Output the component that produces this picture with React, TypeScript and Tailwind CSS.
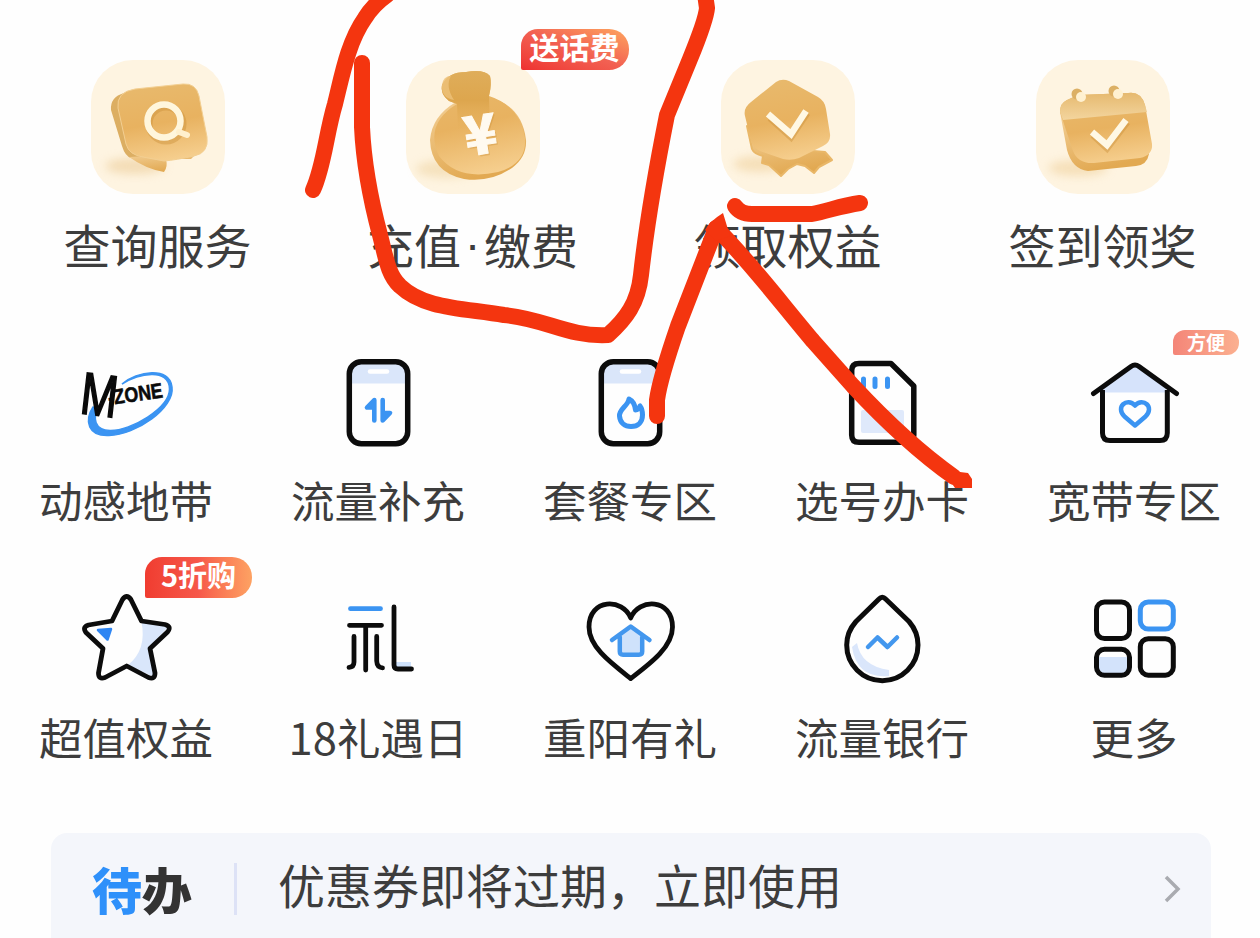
import type { ReactNode } from "react";

type Entry = {
  name: ReactNode;
  icon: ReactNode;
  badge?: ReactNode;
};

const SearchArt = () => (
  <>
    <ellipse cx="44" cy="106" rx="30" ry="8" fill="#e9c58a" opacity="0.5" filter="url(#soft)" />
    <path d="M20 50 Q19 37 33 33 L50 40 L52 98 L40 98 Q34 96 31 86Z" fill="#dcae62" />
    <path d="M38 97 Q55 109 73 112 Q77 107 75 99 L100 99 L106 93Z" fill="url(#goldDark)" />
    <path d="M44 29 L92 24 Q105 23 108 36 L116 77 Q118 93 103 96 Q85 100 73 101 L52 97 Q38 95 35 84 L27 48 Q25 32 44 29Z" fill="url(#gold)" stroke="#f3cf92" strokeWidth="1" />
    <ellipse cx="75" cy="64" rx="17" ry="17" fill="none" stroke="#c98c35" strokeWidth="7" opacity="0.4" />
    <circle cx="73" cy="61" r="16.5" fill="none" stroke="#fff6dc" strokeWidth="6.5" />
    <path d="M88 72 L96 75" stroke="#fff0cd" strokeWidth="6" strokeLinecap="round" />
  </>
);

const MoneyArt = () => (
  <>
    <ellipse cx="40" cy="109" rx="30" ry="9" fill="#f0d6a6" opacity="0.6" filter="url(#soft)" />
    <path d="M50 42 Q26 56 24 80 Q25 112 58 119 Q84 123 106 108 Q121 97 120 80 Q116 45 82 37Z" fill="url(#goldDark)" />
    <path d="M43 41 Q34 34 36 25 Q42 12 60 12 Q78 9 84 16 Q86 24 83 36 Q114 46 119 78 Q121 104 92 112 Q52 121 33 96 Q18 64 51 44Z" fill="url(#gold)" />
    <path d="M43 41 Q34 34 36 25 Q42 12 60 12 Q78 9 84 16 Q86 24 83 36 L84 70 H52 L51 44Z" fill="url(#neck)" />
    <path d="M36 25 Q37 16 45 16 Q39 26 48 40 Q35 38 36 25Z" fill="#eec27a" opacity="0.8" />
    <g transform="rotate(-9 75 75)" fontFamily="Noto Sans CJK SC, sans-serif" fontSize="54" fontWeight="900" textAnchor="middle">
      <text x="76" y="96" fill="#c98c35" opacity="0.35">¥</text>
      <text x="74.500" y="94" fill="#fffaf0" stroke="#fffaf0" strokeWidth="1">¥</text>
    </g>
  </>
);

const MedalArt = () => (
  <>
    <ellipse cx="38" cy="104" rx="26" ry="8" fill="#efcf98" opacity="0.55" filter="url(#soft)" />
    <path d="M26 66 L31 89 Q33 94 42 96 L41 103 L48 105 L60 116 L67 109 L76 104 L84 106 L93 113 L98 107 L111 100 L104 92 L80 90Z" fill="url(#goldDark)" stroke="#e9b768" strokeWidth="2" strokeLinejoin="round" />
    <path d="M55 22 Q61 18 68 21 L97 37 Q104 41 105 49 L109 74 Q110 82 102 86 L78 98 Q70 101 62 99 L39 91 Q32 88 30 81 L24 56 Q22 48 30 42Z" fill="url(#gold)" />
    <path d="M49 58 L70 77 L86 53" fill="none" stroke="#c98c35" strokeWidth="7" opacity="0.4" />
    <path d="M47 54 L70 74 L85 51" fill="none" stroke="#fff8e4" strokeWidth="6.5" />
  </>
);

const CalendarArt = () => (
  <>
    <ellipse cx="42" cy="108" rx="30" ry="8" fill="#efcf98" opacity="0.55" filter="url(#soft)" />
    <path d="M24 52 L31 90 Q36 109 52 111 L100 106 Q111 105 113 94 L104 60Z" fill="url(#goldDark)" />
    <path d="M24 52 Q24 43 31 40 L42 35 L92 33 Q105 31 109 45 L116 84 Q117 95 104 98 L58 103 Q42 104 37 91Z" fill="url(#gold)" />
    <path d="M24 52 Q24 43 31 40 L42 35 L92 33 Q105 31 109 45 L111 52 L27 60Z" fill="url(#band)" />
    <circle cx="41" cy="34" r="5.5" fill="#dcb065" />
    <circle cx="45" cy="37" r="5" fill="#fff1d1" />
    <circle cx="78" cy="31" r="5.5" fill="#dcb065" />
    <circle cx="82" cy="34" r="5" fill="#fff1d1" />
    <path d="M57 75 L71 88 L91 62" fill="none" stroke="#c98c35" strokeWidth="7" opacity="0.4" />
    <path d="M56 72 L71 85 L90 60" fill="none" stroke="#fff8e4" strokeWidth="6.5" />
  </>
);

const MZoneIcon = () => (
  <>
    <path d="M46 31 C62 21 93 14 93.500 36 C93.500 55 55 78 34 77.500 C18 77 17 65 22 55 L17 54 C8 68 12 83.500 33 82.500 C60 82 99 55 96 34 C94 13 61 18 46 31Z" fill="#3b94f2" stroke="#3b94f2" strokeWidth="1.500" />
    <g fontFamily="Liberation Sans, sans-serif" fontWeight="700" fill="#0a0a0a">
      <text transform="matrix(0.78 0.1 -0.12 1.05 3 60)" fontSize="56" fontWeight="400" stroke="#0a0a0a" strokeWidth="1.800">M</text>
      <text transform="translate(33 52) rotate(-8)" fontSize="21" textLength="55" lengthAdjust="spacingAndGlyphs" stroke="#0a0a0a" strokeWidth="0.600">-ZONE</text>
    </g>
  </>
);

const PhoneFrame = ({ children }: { children: ReactNode }) => (
  <>
    <rect x="23" y="11" width="55" height="19.5" fill="#dae6fa" />
    <path d="M42 18.5 H59" stroke="#fff" strokeWidth="4.5" strokeLinecap="round" />
    <rect x="21.3" y="8.8" width="58.4" height="82" rx="12" fill="none" stroke="#0c0c0c" strokeWidth="5.5" />
    {children}
  </>
);

const DataIcon = () => (
  <PhoneFrame>
    <path d="M46.3 67.500 V47 L39 54.500 H46 M54.700 47 V67.500 L62 60 H55" fill="#3b94f2" stroke="#3b94f2" strokeWidth="4.600" strokeLinecap="round" strokeLinejoin="round" />
  </PhoneFrame>
);

const FlameIcon = () => (
  <PhoneFrame>
    <path d="M49 46 C48 53 39 56 39.500 63 C40 70 45 73.500 51 73.500 C58 73.500 62.500 69 62.500 62 C62.500 58 61.500 55 60 53 C59 56 57.500 57 55.500 57 C55 52 53 48 49 46Z" fill="none" stroke="#3b94f2" strokeWidth="5" strokeLinejoin="round" />
  </PhoneFrame>
);

const SimIcon = () => (
  <>
    <rect x="29" y="57" width="43" height="23" rx="2" fill="#dfe9fb" />
    <path d="M27 10.500 H59 L81.800 33 V82 Q81.800 89.300 75 89.300 H27 Q19.700 89.300 19.700 82 V17.500 Q19.700 10.500 27 10.500Z" fill="none" stroke="#0c0c0c" strokeWidth="5.500" strokeLinejoin="round" />
    <path d="M31.500 26 V33.500 M43 26 V33.500 M55.500 26 V33.500" stroke="#3b94f2" strokeWidth="5" strokeLinecap="round" />
  </>
);

const HomeIcon = () => (
  <>
    <path d="M19 36 L51 12 L82 36 V39.500 H19Z" fill="#d6e3fb" />
    <path d="M18.500 37 V80 Q18.500 87.500 26 87.500 H76 Q83.300 87.500 83.300 80 V37" fill="none" stroke="#0c0c0c" strokeWidth="5" />
    <path d="M9.500 40.500 L47 13.500 Q51 10.500 55 13.500 L92.500 40.500" fill="none" stroke="#0c0c0c" strokeWidth="5" strokeLinecap="round" />
    <path d="M51 72.500 L40.500 63.500 C31 54 43 44 51 52.500 C59 44 71 54 61.500 63.500Z" fill="none" stroke="#3b94f2" strokeWidth="4.500" strokeLinejoin="round" />
  </>
);

const StarIcon = () => (
  <>
    <path d="M65.500 32 L92 37 L73 58 L78 87 L52 75 Q71 60 65.500 32Z" fill="#d9e6fb" />
    <path d="M46.500 9.500 Q50.700 3.500 54.900 9.500 L65.500 31 L89 34.500 Q96 36.500 91.500 42 L74 58.500 L79 83 Q79 90 72.500 87.500 L50.700 76 L29 87.500 Q22.500 90 22.500 83 L27 58.500 L10 42.500 Q6 37 12.500 35 L36 31Z" fill="none" stroke="#0c0c0c" strokeWidth="4.800" strokeLinejoin="round" />
    <path d="M22 40 L35 39 L31.500 49.500Z" fill="#2f86f3" stroke="#2f86f3" strokeWidth="2.500" strokeLinejoin="round" />
  </>
);

const GiftDayIcon = () => (
  <>
    <rect x="68" y="72" width="15" height="6" fill="#cfe2fb" />
    <g fill="none" strokeWidth="4.800" strokeLinecap="round">
      <path d="M22.500 18.700 H52.500" stroke="#3b94f2" />
      <path d="M21.500 35.300 H53.500 M37.700 36 V80 M26 46.500 V72 Q26 77 21 77.300 M48.700 46.500 V71 Q49 77.500 54.500 77.800" stroke="#0c0c0c" />
      <path d="M66 17 V75 Q66 79 70 79 H83.500" stroke="#0c0c0c" strokeLinejoin="round" />
    </g>
  </>
);

const HeartIcon = () => (
  <>
    <path d="M50.700 28 C43 8 9 8 9 37 C9 57 31 73 50.700 88.500 C71 73 92.500 57 92.500 37 C92.500 8 58.500 8 50.700 28Z" fill="none" stroke="#0c0c0c" strokeWidth="4.800" strokeLinejoin="round" />
    <path d="M39.500 47 L50.700 37 L62.500 47 V62.500 Q62.500 65 60 65 H42 Q39.500 65 39.500 62.500Z" fill="#cfe2fb" />
    <path d="M32 50 L50.700 36.500 L69.500 50 M39.800 47 V61.500 Q39.800 64.700 43 64.700 H59 Q62.200 64.700 62.200 61.500 V47" fill="none" stroke="#4397ee" strokeWidth="4.500" strokeLinecap="round" strokeLinejoin="round" />
  </>
);

const DropIcon = () => (
  <>
    <path d="M25 53 Q29 76 57 80 V86 Q25 89 20 57Z" fill="#dae6fb" />
    <path d="M47 9 Q50.300 5.500 53.600 9 L77 31.500 Q86 42 86 55 A35.600 35.600 0 0 1 14.700 55 Q14.700 42 24 31.500Z" fill="none" stroke="#0c0c0c" strokeWidth="5" strokeLinejoin="round" />
    <path d="M36 57 L45.500 47.500 L55.500 57 L65 47.500" fill="none" stroke="#4397ee" strokeWidth="4.500" strokeLinecap="round" strokeLinejoin="round" />
  </>
);

const MoreIcon = () => (
  <>
    <rect x="15" y="67" width="28" height="18" fill="#d3e3fb" />
    <g fill="none" stroke="#0c0c0c" strokeWidth="5">
      <rect x="12.500" y="12" width="33" height="36.500" rx="8" />
      <rect x="56.300" y="12" width="33" height="27" rx="8" stroke="#3b94f2" />
      <rect x="12.500" y="59.300" width="33" height="26" rx="8" />
      <rect x="56.300" y="48.700" width="33" height="36.500" rx="8" />
    </g>
  </>
);

const mainEntries: Entry[] = [
  { name: "查询服务", icon: <SearchArt /> },
  {
    name: (
      <>
        <span>充值</span>
        <span className="w-[23px] text-center font-['Liberation_Sans',sans-serif]">·</span>
        <span>缴费</span>
      </>
    ),
    icon: <MoneyArt />,
    badge: (
      <span className="absolute left-[115px] top-[-31px] flex h-[41px] w-[108px] items-center justify-center rounded-[20px] rounded-tl-[17px] rounded-bl-[2px] bg-linear-to-tr from-[#ee3030] via-[#f26052] to-[#fda55f] pb-[7px] text-[30px] font-bold leading-none text-white">
        送话费
      </span>
    ),
  },
  { name: "领取权益", icon: <MedalArt /> },
  { name: "签到领奖", icon: <CalendarArt /> },
];

const subEntries: Entry[] = [
  { name: "动感地带", icon: <MZoneIcon /> },
  { name: "流量补充", icon: <DataIcon /> },
  { name: "套餐专区", icon: <FlameIcon /> },
  { name: "选号办卡", icon: <SimIcon /> },
  {
    name: "宽带专区",
    icon: <HomeIcon />,
    badge: (
      <span className="absolute left-[89px] top-[-23px] flex h-[25px] w-[66px] items-center justify-center rounded-[12px] rounded-bl-[2px] bg-linear-to-r from-[#f48578] to-[#fbb090] pb-[3px] text-[19px] font-bold leading-none text-white">
        方便
      </span>
    ),
  },
  {
    name: "超值权益",
    icon: <StarIcon />,
    badge: (
      <span className="absolute left-[69px] top-[-33px] flex h-[41px] w-[107px] items-center justify-center rounded-[20px] rounded-tl-[17px] rounded-bl-[2px] bg-linear-to-r from-[#f03c30] via-[#f6584a] to-[#fda263] pb-[7px] text-[29px] font-bold leading-none text-white">
        5折购
      </span>
    ),
  },
  { name: "18礼遇日", icon: <GiftDayIcon /> },
  { name: "重阳有礼", icon: <HeartIcon /> },
  { name: "流量银行", icon: <DropIcon /> },
  { name: "更多", icon: <MoreIcon /> },
];

export default function App() {
  return (
    <div className="relative flex h-[938px] w-[1260px] flex-col overflow-hidden bg-[#fefefe] font-['Noto_Sans_CJK_SC',sans-serif] text-[#3d3d3d]">
      <section className="grid grid-cols-4 pt-[60px]">
        {mainEntries.map((entry, index) => (
          <div key={index} className="flex flex-col items-center">
            <div className="relative h-[134px] w-[134px] rounded-[42px] bg-[#fef4e1]">
              <svg viewBox="0 0 134 134" className="h-full w-full">
                <defs>
                  <linearGradient id="gold" x1="0.4" y1="0" x2="0.6" y2="1">
                    <stop offset="0" stopColor="#e8b96c" />
                    <stop offset="0.5" stopColor="#e8b260" />
                    <stop offset="1" stopColor="#f6cf8f" />
                  </linearGradient>
                  <linearGradient id="goldDark" x1="0" y1="0" x2="0.4" y2="1">
                    <stop offset="0" stopColor="#f3d097" />
                    <stop offset="1" stopColor="#e2a952" />
                  </linearGradient>
                  <linearGradient id="neck" x1="0" y1="0" x2="0" y2="1">
                    <stop offset="0" stopColor="#dfad5a" />
                    <stop offset="0.5" stopColor="#dda64e" />
                    <stop offset="1" stopColor="#e4ae58" stopOpacity="0" />
                  </linearGradient>
                  <linearGradient id="band" x1="0" y1="0" x2="0" y2="1">
                    <stop offset="0" stopColor="#e6b96f" />
                    <stop offset="1" stopColor="#f3d59e" />
                  </linearGradient>
                  <filter id="soft" x="-50%" y="-100%" width="200%" height="300%">
                    <feGaussianBlur stdDeviation="5" />
                  </filter>
                </defs>
                {entry.icon}
              </svg>
              {entry.badge}
            </div>
            <div className="mt-[26px] flex whitespace-nowrap text-[47px] leading-[47px]">
              {entry.name}
            </div>
          </div>
        ))}
      </section>

      <section className="mt-[86px] grid grid-cols-5 gap-y-[68px]">
        {subEntries.map((entry, index) => (
          <div key={index} className="flex flex-col items-center">
            <div className="relative h-[100px] w-[100px]">
              <svg viewBox="0 0 100 100" className="h-full w-full">
                {entry.icon}
              </svg>
              {entry.badge}
            </div>
            <div className="mt-[25px] whitespace-nowrap text-[43.5px] leading-[44px]">
              {entry.name}
            </div>
          </div>
        ))}
      </section>

      <section className="ml-[51px] mt-[74px] flex h-[120px] w-[1160px] shrink-0 items-start rounded-[16px] bg-[#f4f6fb] pl-[41px]">
        <div className="mt-[30px] w-[142px] text-[50px] font-black leading-[50px] text-[#333]">
          <span className="text-[#2e90fa]">待</span>办
        </div>
        <div className="mt-[30px] h-[52px] w-[3px] bg-[#dde2f6]" />
        <div className="ml-[41px] mt-[27px] text-[47px] leading-[47px]">
          优惠券即将过期，立即使用
        </div>
        <svg viewBox="0 0 20 30" className="ml-auto mr-[29px] mt-[41px] h-[30px] w-[20px]">
          <path d="M4 3 L16 15 L4 27" fill="none" stroke="#a9abb0" strokeWidth="3.5" />
        </svg>
      </section>

      {/* hand-drawn marker strokes over the page */}
      <svg viewBox="0 0 1260 938" className="pointer-events-none absolute inset-0 h-full w-full">
        <g fill="none" stroke="#f4350f" strokeWidth="16" strokeLinecap="round" strokeLinejoin="round">
          <path d="M313 190 C324 166 326 134 335 104 C342 76 348 42 365 18 Q373 5 387 -5" />
          <path d="M362 63 L362 127 C364 170 372 205 380 235 C386 258 388 275 400 286 C424 309 463 308 504 315 C547 319 567 337 608 335 C626 319 638 303 641 275 C646 230 655 175 667 115 L690 59 Q706 20 707 8 L705 -6" />
          <path d="M735 206 Q740 214 752 214 L812 214 C828 211 840 206 860 203" />
          <path d="M657 416 L657 400 C659 385 668 355 678 326 L716 228" />
          <path d="M716 228 C746 257 781 303 813 341 L853 386 Q906 443 954 477" />
        </g>
        <path d="M705 230 Q710 221 723 213 L730 236 L716 241Z M948 478 L960 472 L968 473 L972 479 V488 H955Z" fill="#f4350f" />
      </svg>
    </div>
  );
}
